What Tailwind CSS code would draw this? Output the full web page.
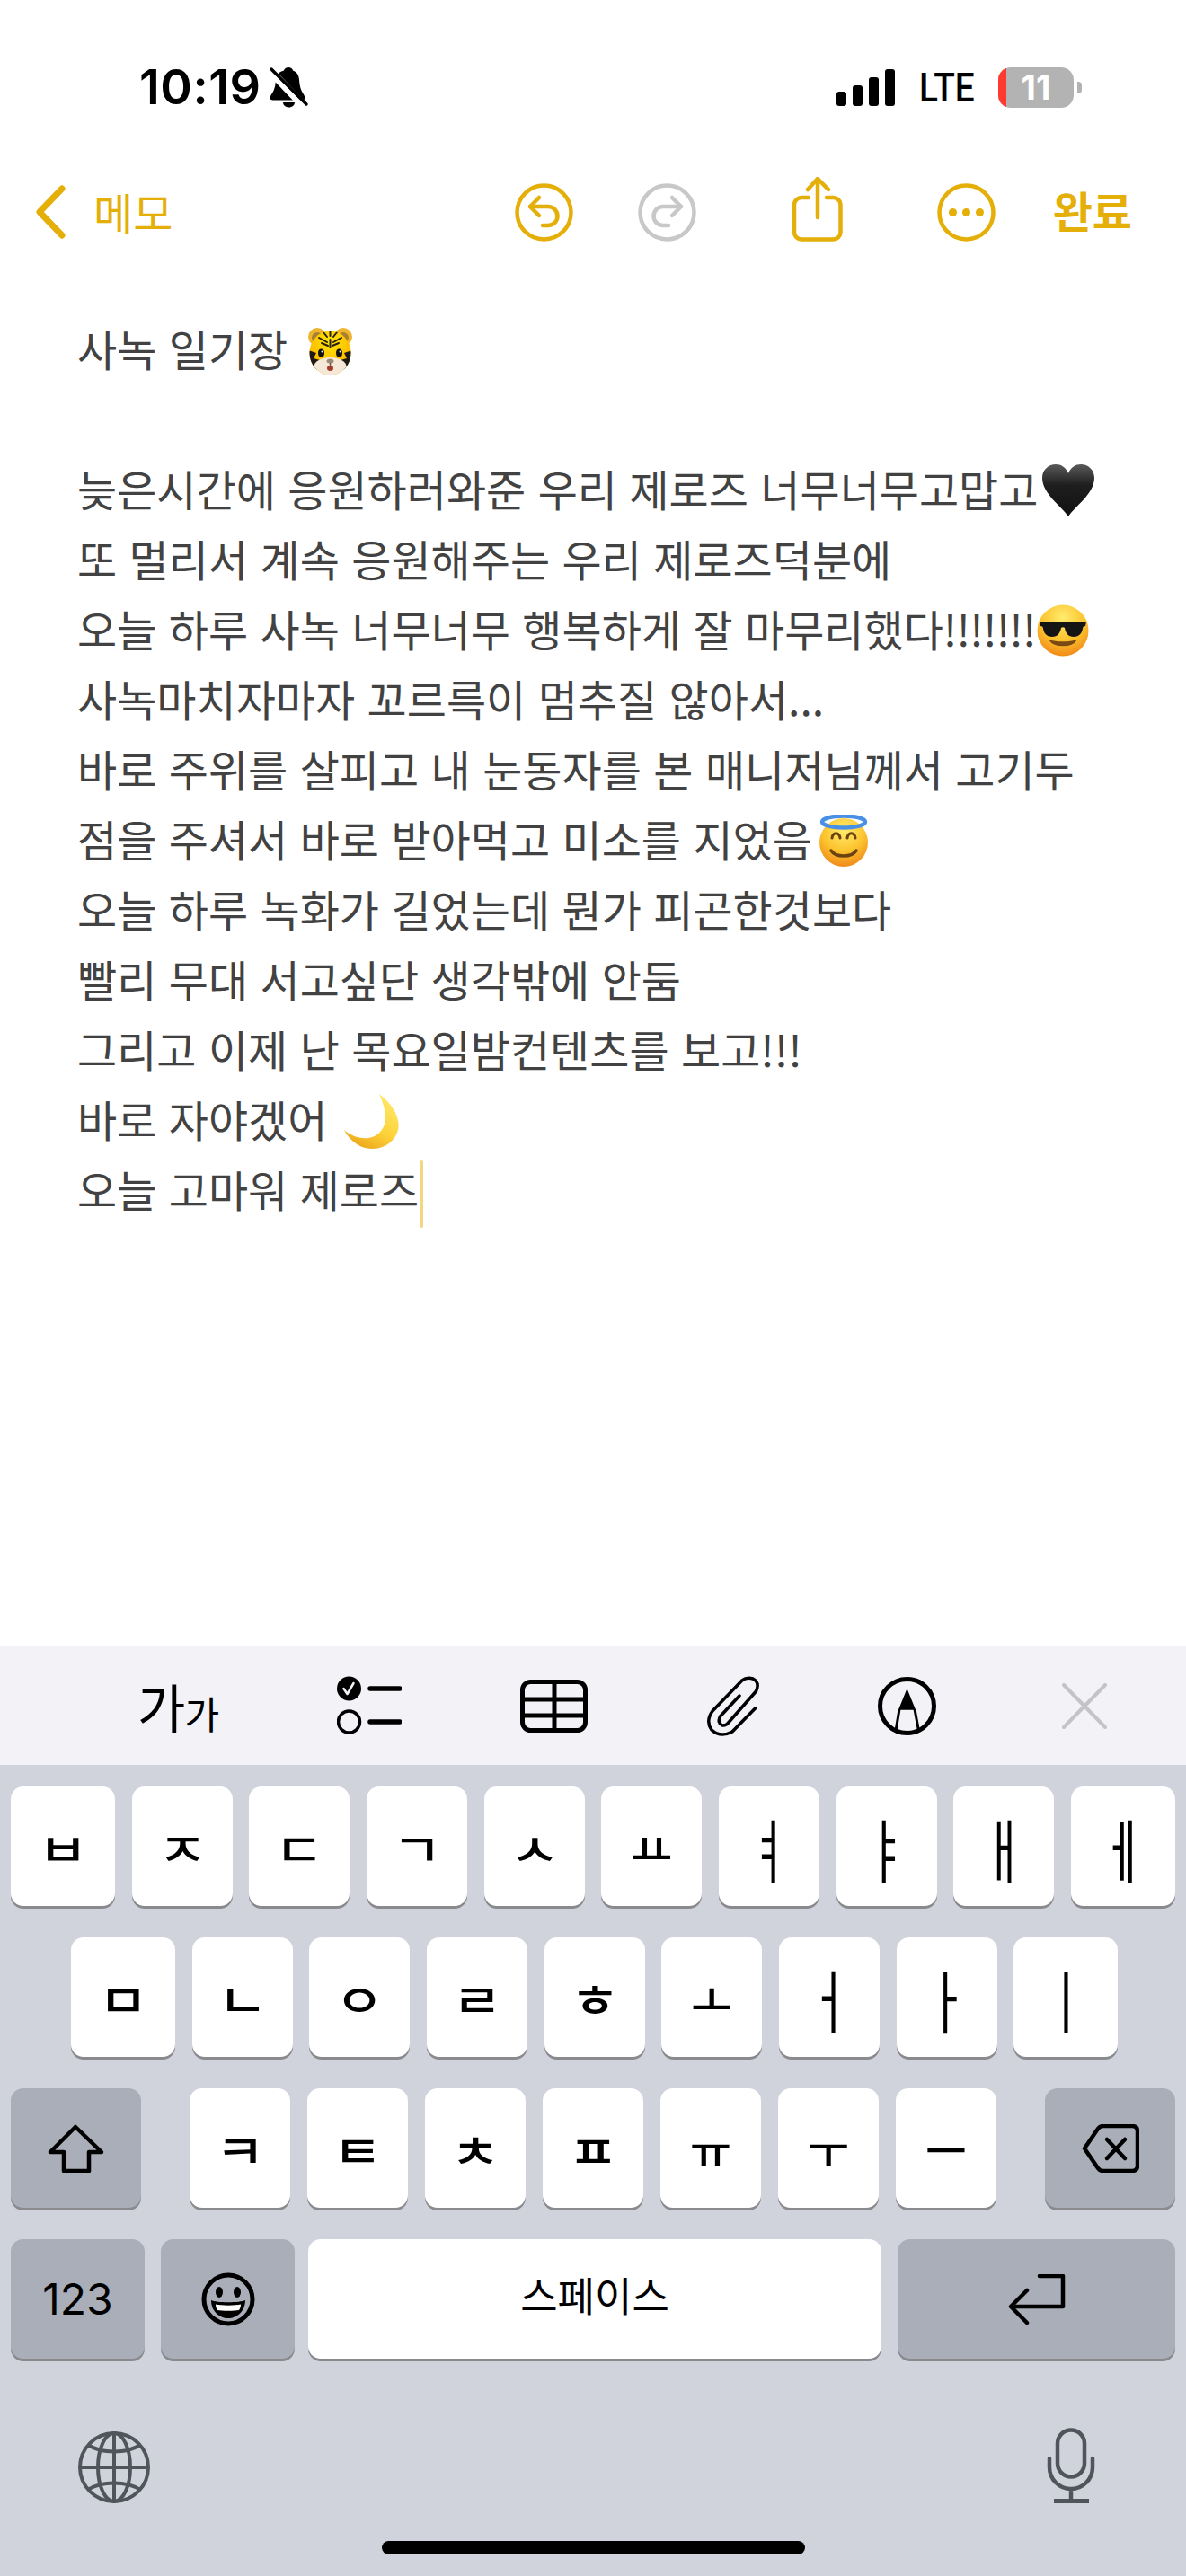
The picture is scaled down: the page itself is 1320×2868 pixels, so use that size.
<!DOCTYPE html>
<html lang="ko">
<head>
<meta charset="utf-8">
<script src="https://cdn.jsdelivr.net/npm/@tailwindcss/browser@4"></script>
<title>메모</title>
</head>
<body class="m-0">
<div class="w-[1320px] h-[2868px] flex flex-col bg-white overflow-hidden font-['Noto_Sans_CJK_KR',sans-serif]">

  <!-- status bar -->
  <div class="mt-[72px] h-[50px] flex items-center justify-between">
    <div class="flex items-center ml-[155px]">
      <span class="font-['Inter',sans-serif] font-semibold text-[54px] leading-none tracking-[0.5px] text-black">10:19</span>
      <svg class="ml-[8px]" width="45" height="46" viewBox="0 0 45 46">
        <path d="M22 1c2.500 0 4.500 1.500 5 3.500 4.500 1.500 6.500 5 7 10 .5 7 1.500 11 4 15 1.500 2.500 2.500 4 2.500 5.500 0 1.500-1 2.500-3 2.500H5c-2.500 0-3.500-1-3.500-2.500 0-1.500 1-3 2.500-5.500 2.500-3.500 3.500-8 4-15 .5-5 3-8.500 9-10C17.500 2.500 19.500 1 22 1z" fill="#000"/>
        <path d="M16 40h13c0 3-3 5.500-6.500 5.500S16 43 16 40z" fill="#000"/>
        <path d="M1 4l42 44" stroke="#fff" stroke-width="9"/>
        <path d="M3 3l39 39" stroke="#000" stroke-width="3.500" stroke-linecap="round"/>
      </svg>
    </div>
    <div class="flex items-center mr-[116px]">
      <div class="flex items-end gap-[7px] h-[41px]">
        <div class="w-[11px] h-[16px] rounded-[3px] bg-black"></div>
        <div class="w-[11px] h-[23px] rounded-[3px] bg-black"></div>
        <div class="w-[11px] h-[32px] rounded-[3px] bg-black"></div>
        <div class="w-[11px] h-[41px] rounded-[3px] bg-black"></div>
      </div>
      <div class="ml-[27px] w-[61px] h-[40px] flex items-center">
        <span class="font-['Roboto',sans-serif] font-medium text-[45px] leading-none text-black origin-left scale-x-[0.86] block">LTE</span>
      </div>
      <div class="ml-[27px] relative w-[84px] h-[45px] rounded-[14px] bg-[#b3b3b3] overflow-hidden flex items-center justify-center">
        <div class="absolute left-0 top-0 bottom-0 w-[9px] bg-[#ff3b30]"></div>
        <span class="font-['Inter',sans-serif] font-bold text-[38px] leading-none text-white">11</span>
      </div>
      <div class="ml-[4px] w-[5px] h-[13px] rounded-r-[4px] bg-[#b3b3b3]"></div>
    </div>
  </div>

  <!-- nav bar -->
  <div class="mt-[74px] h-[80px] flex items-center text-[#e5af0a]">
    <svg class="ml-[40px]" width="33" height="60" viewBox="0 0 33 60" fill="none" stroke="#e5af0a" stroke-width="7" stroke-linecap="round" stroke-linejoin="round">
      <path d="M29 4L4 30l25 26"/>
    </svg>
    <span class="ml-[31px] -mt-[3px] text-[48px] leading-none">메모</span>
    <div class="ml-auto mr-[60px] flex items-center">
      <svg width="65" height="65" viewBox="0 0 65 65" fill="none" stroke="#e5af0a" stroke-width="4.500" stroke-linecap="round" stroke-linejoin="round">
        <circle cx="32.500" cy="32.500" r="30"/>
        <path d="M27 16L17 26l10 10"/>
        <path d="M17 26h20a10.500 10.500 0 0 1 0 21h-6"/>
      </svg>
      <svg class="ml-[72px]" width="65" height="65" viewBox="0 0 65 65" fill="none" stroke="#c8c8c8" stroke-width="4.500" stroke-linecap="round" stroke-linejoin="round">
        <circle cx="32.500" cy="32.500" r="30"/>
        <path d="M38 16l10 10-10 10"/>
        <path d="M48 26H28a10.500 10.500 0 0 0 0 21h6"/>
      </svg>
      <svg class="ml-[107px] -mt-[6px]" width="56" height="72" viewBox="0 0 56 72" fill="none" stroke="#e5af0a" stroke-width="4.500" stroke-linecap="round" stroke-linejoin="round">
        <path d="M18 23H10a8 8 0 0 0-8 8V61.500a8 8 0 0 0 8 8H45.500a8 8 0 0 0 8-8V31a8 8 0 0 0-8-8H38"/>
        <path d="M28 3V45"/>
        <path d="M17 14L28 2l12 12"/>
      </svg>
      <svg class="ml-[105px]" width="65" height="65" viewBox="0 0 65 65" fill="none">
        <circle cx="32.500" cy="32.500" r="30" stroke="#e5af0a" stroke-width="4.500"/>
        <circle cx="17.500" cy="32.500" r="4.500" fill="#e5af0a"/>
        <circle cx="32.500" cy="32.500" r="4.500" fill="#e5af0a"/>
        <circle cx="47.500" cy="32.500" r="4.500" fill="#e5af0a"/>
      </svg>
      <span class="ml-[64px] -mt-[6px] text-[48px] leading-none font-semibold">완료</span>
    </div>
  </div>

  <!-- note -->
  <div class="mt-[72px] pl-[86px] text-[48px] leading-[78px] text-[#424242]">
    <div class="h-[78px] flex items-center">
      <span>사녹 일기장</span>
      <svg class="ml-[23px] mt-[8px]" width="49" height="54" viewBox="0 0 49 54">
        <defs>
          <radialGradient id="tg" cx="50%" cy="30%" r="65%"><stop offset="0" stop-color="#ffe600"/><stop offset="0.7" stop-color="#fdbf00"/><stop offset="1" stop-color="#ee9a00"/></radialGradient>
          <clipPath id="tc"><ellipse cx="24.500" cy="29" rx="23" ry="24.500"/></clipPath>
        </defs>
        <circle cx="10" cy="11" r="10" fill="#eeb52e"/><circle cx="10" cy="12" r="6" fill="#a9802f"/>
        <circle cx="39" cy="11" r="10" fill="#eeb52e"/><circle cx="39" cy="12" r="6" fill="#a9802f"/>
        <g clip-path="url(#tc)">
          <rect width="49" height="54" fill="url(#tg)"/>
          <path d="M0 26l9 3-3 6 7 2-4 12H0zM49 26l-9 3 3 6-7 2 4 12h9z" fill="#1d1a16"/>
          <ellipse cx="24.500" cy="44" rx="18" ry="10" fill="#f6e8d6"/>
          <path d="M24.500 5v5M17 6l4 5M32 6l-4 5M12 12l9 5M37 12l-9 5M15 18l7 3M34 18l-7 3M24.500 14v9" stroke="#2a2112" stroke-width="2" stroke-linecap="round"/>
        </g>
        <ellipse cx="14.500" cy="29" rx="3.500" ry="4.500" fill="#111"/><circle cx="15.500" cy="27.500" r="1" fill="#fff"/>
        <ellipse cx="34.500" cy="29" rx="3.500" ry="4.500" fill="#111"/><circle cx="35.500" cy="27.500" r="1" fill="#fff"/>
        <ellipse cx="24.500" cy="38" rx="4" ry="2.500" fill="#9a8a78"/>
        <path d="M24.500 40v3" stroke="#6b5a4a" stroke-width="1.500"/>
        <ellipse cx="24.500" cy="46" rx="3.500" ry="3" fill="#a33a2b"/>
      </svg>
    </div>
    <div class="h-[78px]"></div>
    <div class="h-[78px] flex items-center">
      <span>늦은시간에 응원하러와준 우리 제로즈 너무너무고맙고</span>
      <svg class="ml-[5px] mt-[6px]" width="58" height="58" viewBox="0 0 58 58">
        <defs><linearGradient id="hg" x1="0" y1="0" x2="0" y2="1"><stop offset="0" stop-color="#5a5a5a"/><stop offset="0.4" stop-color="#1e1e1e"/><stop offset="1" stop-color="#111"/></linearGradient></defs>
        <path d="M29 58C22 47 0 33 0 15 0 6 7 0 15 0c6 0 11 3 14 10C32 3 37 0 43 0c8 0 15 6 15 15 0 18-22 32-29 43z" fill="url(#hg)"/>
      </svg>
    </div>
    <div class="h-[78px]">또 멀리서 계속 응원해주는 우리 제로즈덕분에</div>
    <div class="h-[78px] flex items-center">
      <span>오늘 하루 사녹 너무너무 행복하게 잘 마무리했다<span class="tracking-[-0.8px]">!!!!!!!</span></span>
      <svg class="ml-[1px] mt-[5px]" width="58" height="58" viewBox="0 0 58 58">
        <defs><radialGradient id="fa" cx="50%" cy="25%" r="80%"><stop offset="0" stop-color="#ffec6e"/><stop offset="0.55" stop-color="#fcc22d"/><stop offset="1" stop-color="#ef8216"/></radialGradient></defs>
        <circle cx="29" cy="29" r="28.500" fill="url(#fa)"/>
        <path d="M3 19h52l-1 5c-2 0-3 1-3 3-1 6-5 9-10 9-6 0-9-4-10-10-1-1-3-1-4 0-1 6-4 10-10 10-5 0-9-3-10-9 0-2-1-3-3-3z" fill="#141414"/>
        <path d="M15 40c4 7 24 7 28 0-5 3-23 3-28 0z" fill="#7a4a14" stroke="#7a4a14" stroke-width="2" stroke-linejoin="round"/>
      </svg>
    </div>
    <div class="h-[78px]">사녹마치자마자 꼬르륵이 멈추질 않아서...</div>
    <div class="h-[78px]">바로 주위를 살피고 내 눈동자를 본 매니저님께서 고기두</div>
    <div class="h-[78px] flex items-center">
      <span>점을 주셔서 바로 받아먹고 미소를 지었음</span>
      <svg class="ml-[6px] mt-[6px]" width="58" height="58" viewBox="0 0 58 58">
        <defs>
          <radialGradient id="fb" cx="50%" cy="25%" r="80%"><stop offset="0" stop-color="#ffec6e"/><stop offset="0.55" stop-color="#fcc22d"/><stop offset="1" stop-color="#ef8216"/></radialGradient>
        </defs>
        <circle cx="29" cy="31" r="27" fill="url(#fb)"/>
        <ellipse cx="29" cy="8" rx="24" ry="6.500" fill="none" stroke="#4a8fe6" stroke-width="4.500"/>
        <path d="M16 26c1-7 8-7 9 0M33 26c1-7 8-7 9 0" fill="none" stroke="#6b4313" stroke-width="3" stroke-linecap="round"/>
        <path d="M15 40c5 8 23 8 28 0" fill="none" stroke="#6b4313" stroke-width="3.500" stroke-linecap="round"/>
      </svg>
    </div>
    <div class="h-[78px]">오늘 하루 녹화가 길었는데 뭔가 피곤한것보다</div>
    <div class="h-[78px]">빨리 무대 서고싶단 생각밖에 안둠</div>
    <div class="h-[78px]">그리고 이제 난 목요일밤컨텐츠를 보고!!!</div>
    <div class="h-[78px] flex items-center">
      <span>바로 자야겠어</span>
      <svg class="ml-[19px] mt-[7px]" width="62" height="62" viewBox="0 0 62 62">
        <defs><linearGradient id="mg" x1="0.8" y1="0" x2="0.3" y2="1"><stop offset="0" stop-color="#ffe96b"/><stop offset="0.6" stop-color="#fdd23a"/><stop offset="1" stop-color="#eca71c"/></linearGradient></defs>
        <path d="M39 0C55 12 63 28 60 40C56 54 44 61 31 61C16 61 5 50 0 40C8 47 18 50 27 49C40 47 47 36 46 24C45 14 42 7 39 0Z" fill="url(#mg)"/>
      </svg>
    </div>
    <div class="h-[78px] flex items-center relative">
      <span>오늘 고마워 제로즈</span>
      <div class="w-[4px] h-[75px] bg-[#f4d681] rounded-full ml-[1px] mt-[13px]"></div>
    </div>
  </div>

  <!-- keyboard -->
  <div class="mt-auto">
    <!-- toolbar -->
    <div class="h-[132px] bg-[#f2f2f7] flex items-center text-black">
      <div class="ml-[153px] w-[90px] h-[56px] flex items-end leading-none">
        <span class="text-[58px] leading-[56px]">가</span><span class="text-[42px] leading-[40px] -ml-[1px]">가</span>
      </div>
      <svg class="ml-[132px]" width="72" height="66" viewBox="0 0 72 66" fill="none">
        <circle cx="13.500" cy="14" r="13.500" fill="#000"/>
        <path d="M7.500 14l4 6 7-12" stroke="#f2f2f7" stroke-width="2.500" stroke-linecap="round" stroke-linejoin="round"/>
        <circle cx="13.500" cy="51" r="12" stroke="#000" stroke-width="3.500"/>
        <path d="M37 14h33M37 51h33" stroke="#000" stroke-width="5.500" stroke-linecap="round"/>
      </svg>
      <svg class="ml-[132px]" width="75" height="59" viewBox="0 0 75 59" fill="none" stroke="#000" stroke-width="5">
        <rect x="2.500" y="2.500" width="70" height="54" rx="9"/>
        <path d="M38 2.500v54M2.500 22h70M2.500 40h70"/>
      </svg>
      <svg class="ml-[131px]" width="61" height="67" viewBox="0 0 61 67" fill="none" stroke="#000" stroke-width="3.500" stroke-linecap="round" stroke-linejoin="round">
        <path d="M38 22L16.500 45Q13 52 19 55Q23 55.500 25.600 52L56.500 17Q61 7 53 3Q46 1 40.800 5L8 39Q0 50 7 60Q17 69 30 62L55.500 36"/>
      </svg>
      <svg class="ml-[131px]" width="65" height="65" viewBox="0 0 65 65" fill="none">
        <circle cx="32.500" cy="32.500" r="30" stroke="#000" stroke-width="5"/>
        <path d="M32.500 15L41 36H24z" fill="#000" stroke="#000" stroke-width="1.500" stroke-linejoin="round"/>
        <path d="M24 36L20 60M41 36L45.500 60" stroke="#000" stroke-width="3"/>
      </svg>
      <svg class="ml-[140px]" width="50" height="51" viewBox="0 0 50 51" fill="none" stroke="#c4c4c8" stroke-width="4" stroke-linecap="round">
        <path d="M2 2l46 47M48 2L2 49"/>
      </svg>
    </div>

    <!-- keys -->
    <div class="bg-[#d0d3dc] h-[903px] pt-[24px] text-black">
      <div class="px-[12px] flex flex-col gap-[35px]">
        <div class="flex justify-between">
          <div class="flex items-center justify-center h-[133px] w-[116px] rounded-[14px] bg-white shadow-[0_3px_0_#8a8a8e] text-[50px] leading-none"><span class="font-medium scale-x-[1.2]">ㅂ</span></div>
          <div class="flex items-center justify-center h-[133px] w-[112px] rounded-[14px] bg-white shadow-[0_3px_0_#8a8a8e] text-[50px] leading-none"><span class="font-medium scale-x-[1.2]">ㅈ</span></div>
          <div class="flex items-center justify-center h-[133px] w-[112px] rounded-[14px] bg-white shadow-[0_3px_0_#8a8a8e] text-[50px] leading-none"><span class="font-medium scale-x-[1.2]">ㄷ</span></div>
          <div class="flex items-center justify-center h-[133px] w-[112px] rounded-[14px] bg-white shadow-[0_3px_0_#8a8a8e] text-[50px] leading-none"><span class="font-medium scale-x-[1.2]">ㄱ</span></div>
          <div class="flex items-center justify-center h-[133px] w-[112px] rounded-[14px] bg-white shadow-[0_3px_0_#8a8a8e] text-[50px] leading-none"><span class="font-medium scale-x-[1.2]">ㅅ</span></div>
          <div class="flex items-center justify-center h-[133px] w-[112px] rounded-[14px] bg-white shadow-[0_3px_0_#8a8a8e] text-[50px] leading-none"><span class="font-medium">ㅛ</span></div>
          <div class="flex items-center justify-center h-[133px] w-[112px] rounded-[14px] bg-white shadow-[0_3px_0_#8a8a8e] text-[50px] leading-none"><span class="scale-y-[1.55]">ㅕ</span></div>
          <div class="flex items-center justify-center h-[133px] w-[112px] rounded-[14px] bg-white shadow-[0_3px_0_#8a8a8e] text-[50px] leading-none"><span class="scale-y-[1.55]">ㅑ</span></div>
          <div class="flex items-center justify-center h-[133px] w-[112px] rounded-[14px] bg-white shadow-[0_3px_0_#8a8a8e] text-[50px] leading-none"><span class="scale-y-[1.55]">ㅐ</span></div>
          <div class="flex items-center justify-center h-[133px] w-[116px] rounded-[14px] bg-white shadow-[0_3px_0_#8a8a8e] text-[50px] leading-none"><span class="scale-y-[1.55]">ㅔ</span></div>
        </div>
        <div class="flex pl-[67px] gap-[18.67px]">
          <div class="flex items-center justify-center h-[133px] w-[116px] rounded-[14px] bg-white shadow-[0_3px_0_#8a8a8e] text-[50px] leading-none"><span class="font-medium scale-x-[1.2]">ㅁ</span></div>
          <div class="flex items-center justify-center h-[133px] w-[112px] rounded-[14px] bg-white shadow-[0_3px_0_#8a8a8e] text-[50px] leading-none"><span class="font-medium scale-x-[1.2]">ㄴ</span></div>
          <div class="flex items-center justify-center h-[133px] w-[112px] rounded-[14px] bg-white shadow-[0_3px_0_#8a8a8e] text-[50px] leading-none"><span class="font-medium scale-x-[1.2]">ㅇ</span></div>
          <div class="flex items-center justify-center h-[133px] w-[112px] rounded-[14px] bg-white shadow-[0_3px_0_#8a8a8e] text-[50px] leading-none"><span class="font-medium scale-x-[1.2]">ㄹ</span></div>
          <div class="flex items-center justify-center h-[133px] w-[112px] rounded-[14px] bg-white shadow-[0_3px_0_#8a8a8e] text-[50px] leading-none"><span class="font-medium scale-x-[1.2]">ㅎ</span></div>
          <div class="flex items-center justify-center h-[133px] w-[112px] rounded-[14px] bg-white shadow-[0_3px_0_#8a8a8e] text-[50px] leading-none"><span class="font-medium">ㅗ</span></div>
          <div class="flex items-center justify-center h-[133px] w-[112px] rounded-[14px] bg-white shadow-[0_3px_0_#8a8a8e] text-[50px] leading-none"><span class="scale-y-[1.55]">ㅓ</span></div>
          <div class="flex items-center justify-center h-[133px] w-[112px] rounded-[14px] bg-white shadow-[0_3px_0_#8a8a8e] text-[50px] leading-none"><span class="scale-y-[1.55]">ㅏ</span></div>
          <div class="flex items-center justify-center h-[133px] w-[116px] rounded-[14px] bg-white shadow-[0_3px_0_#8a8a8e] text-[50px] leading-none"><span class="scale-y-[1.55]">ㅣ</span></div>
        </div>
        <div class="flex justify-between">
          <div class="flex items-center justify-center h-[133px] w-[145px] rounded-[14px] bg-[#a9aeb9] shadow-[0_3px_0_#8a8a8e]">
            <svg width="63" height="54" viewBox="0 0 63 54" fill="none" stroke="#000" stroke-width="4.500" stroke-linejoin="round">
              <path d="M31 3L3 31H18V52H46V31H60Z"/>
            </svg>
          </div>
          <div class="flex gap-[19px]">
            <div class="flex items-center justify-center h-[133px] w-[112px] rounded-[14px] bg-white shadow-[0_3px_0_#8a8a8e] text-[50px] leading-none"><span class="font-medium scale-x-[1.2]">ㅋ</span></div>
            <div class="flex items-center justify-center h-[133px] w-[112px] rounded-[14px] bg-white shadow-[0_3px_0_#8a8a8e] text-[50px] leading-none"><span class="font-medium scale-x-[1.2]">ㅌ</span></div>
            <div class="flex items-center justify-center h-[133px] w-[112px] rounded-[14px] bg-white shadow-[0_3px_0_#8a8a8e] text-[50px] leading-none"><span class="font-medium scale-x-[1.2]">ㅊ</span></div>
            <div class="flex items-center justify-center h-[133px] w-[112px] rounded-[14px] bg-white shadow-[0_3px_0_#8a8a8e] text-[50px] leading-none"><span class="font-medium scale-x-[1.2]">ㅍ</span></div>
            <div class="flex items-center justify-center h-[133px] w-[112px] rounded-[14px] bg-white shadow-[0_3px_0_#8a8a8e] text-[50px] leading-none"><span class="font-medium">ㅠ</span></div>
            <div class="flex items-center justify-center h-[133px] w-[112px] rounded-[14px] bg-white shadow-[0_3px_0_#8a8a8e] text-[50px] leading-none"><span class="font-medium">ㅜ</span></div>
            <div class="flex items-center justify-center h-[133px] w-[112px] rounded-[14px] bg-white shadow-[0_3px_0_#8a8a8e] text-[50px] leading-none"><span class="font-medium">ㅡ</span></div>
          </div>
          <div class="flex items-center justify-center h-[133px] w-[145px] rounded-[14px] bg-[#a9aeb9] shadow-[0_3px_0_#8a8a8e]">
            <svg width="64" height="54" viewBox="0 0 64 54" fill="none" stroke="#000" stroke-width="4.500" stroke-linejoin="round" stroke-linecap="round">
              <path d="M3 27L18 5Q20 2 24 2H56Q62 2 62 8V46Q62 52 56 52H24Q20 52 18 49Z"/>
              <path d="M28 17L48 38M48 17L28 38"/>
            </svg>
          </div>
        </div>
        <div class="flex">
          <div class="flex items-center justify-center h-[133px] w-[149px] rounded-[14px] bg-[#a9aeb9] shadow-[0_3px_0_#8a8a8e] font-['Inter',sans-serif] text-[48px] leading-none">123</div>
          <div class="ml-[18px] flex items-center justify-center h-[133px] w-[149px] rounded-[14px] bg-[#a9aeb9] shadow-[0_3px_0_#8a8a8e]">
            <svg width="60" height="60" viewBox="0 0 60 60" fill="none">
              <circle cx="30" cy="30" r="27" stroke="#000" stroke-width="5"/>
              <ellipse cx="20" cy="22" rx="4" ry="6" fill="#000"/>
              <ellipse cx="40" cy="22" rx="4" ry="6" fill="#000"/>
              <path d="M11 31c6 3 32 3 38 0 0 12-9 20-19 20s-19-8-19-20z" fill="#000"/>
              <path d="M16 35.500c6 1.500 22 1.500 28 0 0 3-1 5-2 6.500-5 1-19 1-24 0-1-1.500-2-3.500-2-6.500z" fill="#fff"/>
            </svg>
          </div>
          <div class="ml-[15px] flex items-center justify-center h-[133px] w-[638px] rounded-[14px] bg-white shadow-[0_3px_0_#8a8a8e] text-[45px] leading-none"><span class="-mt-[10px]">스페이스</span></div>
          <div class="ml-[18px] flex items-center justify-center h-[133px] w-[309px] rounded-[14px] bg-[#a9aeb9] shadow-[0_3px_0_#8a8a8e]">
            <svg width="64" height="56" viewBox="0 0 64 56" fill="none" stroke="#000" stroke-width="4.500" stroke-linejoin="round" stroke-linecap="round">
              <path d="M35 2H61V36H4"/>
              <path d="M21 18L3 36l18 18"/>
            </svg>
          </div>
        </div>
      </div>
      <!-- globe / mic -->
      <div class="mt-[77px] h-[84px] flex justify-between items-start pl-[87px] pr-[100px]">
        <svg class="mt-[4px]" width="80" height="80" viewBox="0 0 80 80" fill="none" stroke="#50555c" stroke-width="4">
          <circle cx="40" cy="40" r="38"/>
          <ellipse cx="40" cy="40" rx="18" ry="38"/>
          <path d="M40 2v76M2 40h76" />
          <path d="M11 15c15 10 43 10 58 0M11 65c15-10 43-10 58 0"/>
        </svg>
        <svg width="55" height="84" viewBox="0 0 55 84" fill="none" stroke="#50555c" stroke-width="4.500">
          <rect x="12" y="2.500" width="30" height="52" rx="15"/>
          <path d="M3 34v10a24 24 0 0 0 48 0V34M27 68v14" stroke-linecap="round"/>
          <path d="M8 81.500h39" stroke-width="5"/>
        </svg>
      </div>
      <div class="mt-[42px] mx-auto w-[471px] h-[15px] rounded-full bg-black"></div>
    </div>
  </div>
</div>
</body>
</html>
